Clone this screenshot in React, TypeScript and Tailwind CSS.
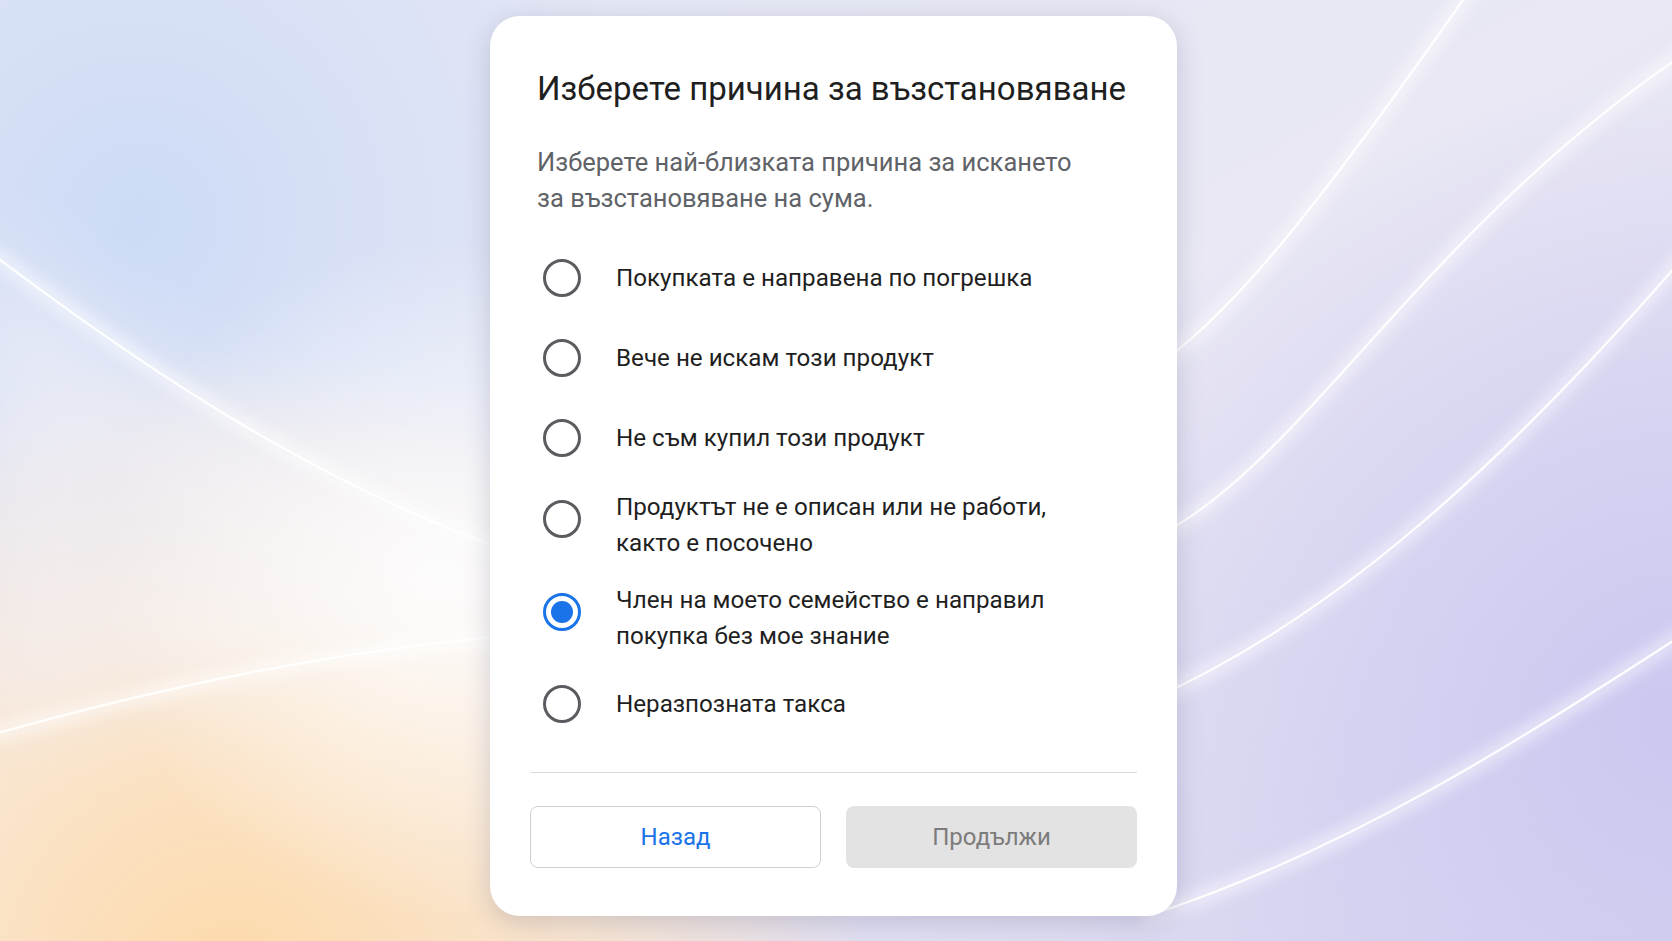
import { useState } from 'react'

type Reason = { id: string; label: string; twoLine?: boolean }

const REASONS: Reason[] = [
  { id: 'mistake', label: 'Покупката е направена по погрешка' },
  { id: 'unwanted', label: 'Вече не искам този продукт' },
  { id: 'notBought', label: 'Не съм купил този продукт' },
  { id: 'broken', label: 'Продуктът не е описан или не работи, както е посочено', twoLine: true },
  { id: 'family', label: 'Член на моето семейство е направил покупка без мое знание', twoLine: true },
  { id: 'unknown', label: 'Неразпозната такса' },
]

// Soft gradient backdrop with glowing light streaks
function Backdrop() {
  const streaks = [
    'M -20 245 C 120 350, 300 480, 520 555',
    'M -20 738 C 150 690, 330 650, 520 635',
    'M 1150 370 C 1230 320, 1330 190, 1470 -10',
    'M 1150 540 C 1300 470, 1420 230, 1690 50',
    'M 1150 700 C 1330 620, 1500 470, 1690 250',
    'M 1150 915 C 1350 850, 1520 740, 1690 630',
  ]
  return (
    <svg className="absolute inset-0 h-full w-full" viewBox="0 0 1672 941" preserveAspectRatio="none">
      <defs>
        <linearGradient id="bgBase" x1="0" y1="0" x2="1" y2="1">
          <stop offset="0" stopColor="#e3e7f6" />
          <stop offset="0.5" stopColor="#e9e8f4" />
          <stop offset="1" stopColor="#d9d6f1" />
        </linearGradient>
        <radialGradient id="bgBlue" cx="140" cy="220" r="520" gradientUnits="userSpaceOnUse">
          <stop offset="0" stopColor="#cddbf6" />
          <stop offset="1" stopColor="#cddbf6" stopOpacity="0" />
        </radialGradient>
        <radialGradient id="bgPeach" cx="230" cy="990" r="640" gradientUnits="userSpaceOnUse">
          <stop offset="0" stopColor="#fdd9a8" />
          <stop offset="0.55" stopColor="#fde5c8" stopOpacity="0.8" />
          <stop offset="1" stopColor="#fde5c8" stopOpacity="0" />
        </radialGradient>
        <radialGradient id="bgLav" cx="1672" cy="720" r="640" gradientUnits="userSpaceOnUse">
          <stop offset="0" stopColor="#cbc8f0" />
          <stop offset="1" stopColor="#cbc8f0" stopOpacity="0" />
        </radialGradient>
        <radialGradient id="bgGlow" cx="440" cy="580" r="340" gradientUnits="userSpaceOnUse">
          <stop offset="0" stopColor="#ffffff" stopOpacity="0.85" />
          <stop offset="1" stopColor="#ffffff" stopOpacity="0" />
        </radialGradient>
        <filter id="soft" x="-20%" y="-20%" width="140%" height="140%">
          <feGaussianBlur stdDeviation="7" />
        </filter>
        <filter id="wide" x="-50%" y="-50%" width="200%" height="200%">
          <feGaussianBlur stdDeviation="40" />
        </filter>
      </defs>
      <rect width="1672" height="941" fill="url(#bgBase)" />
      <rect width="1672" height="941" fill="url(#bgBlue)" />
      <rect width="1672" height="941" fill="url(#bgPeach)" />
      <rect width="1672" height="941" fill="url(#bgLav)" />
      <path
        d="M -20 245 C 120 350, 300 480, 520 555 L 520 635 C 330 650, 150 690, -20 738 Z"
        fill="#f4f2f7"
        opacity="0.55"
        filter="url(#wide)"
      />
      <rect width="1672" height="941" fill="url(#bgGlow)" />
      {streaks.map((d, i) => (
        <g key={i} fill="none" stroke="#ffffff" strokeLinecap="round">
          <path d={d} strokeWidth={16} opacity={0.5} filter="url(#soft)" />
          <path d={d} strokeWidth={2.2} opacity={0.95} />
        </g>
      ))}
    </svg>
  )
}

function RadioDot({ checked }: { checked: boolean }) {
  return checked ? (
    <div className="flex h-[38px] w-[38px] shrink-0 items-center justify-center rounded-full border-[3px] border-[#1a73e8]">
      <div className="h-[22px] w-[22px] rounded-full bg-[#1a73e8]" />
    </div>
  ) : (
    <div className="h-[38px] w-[38px] shrink-0 rounded-full border-[3px] border-[#5a5c60]" />
  )
}

export default function App() {
  const [selected, setSelected] = useState('family')

  return (
    <div
      className="relative flex h-[941px] w-full justify-center overflow-hidden pt-[16px]"
      style={{ fontFamily: 'Roboto, "Noto Sans", sans-serif' }}
    >
      <Backdrop />

      <div className="relative mr-[5px] flex w-[687px] flex-col self-start rounded-[30px] bg-white px-10 pt-[53px] pb-[48px] shadow-[0_6px_26px_rgba(70,72,110,0.22)]">
        {/* Heading */}
        <div className="px-[7px]">
          <h1 className="text-[33px] leading-[40px] text-[#1f1f1f]">
            Изберете причина за възстановяване
          </h1>
          <p className="mt-[35px] max-w-[560px] text-[25.5px] leading-[36px] text-[#5f6368]">
            Изберете най-близката причина за искането
            <br />
            за възстановяване на сума.
          </p>
        </div>

        {/* Reason list */}
        <ul className="mt-[22px] flex flex-col pl-[13px]">
          {REASONS.map(r => (
            <li
              key={r.id}
              onClick={() => setSelected(r.id)}
              className={`flex cursor-pointer items-center gap-[35px] ${r.twoLine ? 'h-[93px]' : 'h-[80px]'}`}
            >
              <div className={r.twoLine ? '-translate-y-[6px]' : ''}>
                <RadioDot checked={selected === r.id} />
              </div>
              <span className="max-w-[470px] text-[24.2px] leading-[36px] text-[#1f1f1f]">{r.label}</span>
            </li>
          ))}
        </ul>

        <div className="mt-[28px] h-px shrink-0 bg-[#d9d9dc]" />

        {/* Actions */}
        <div className="mt-[33px] grid grid-cols-2 gap-[25px]">
          <button className="h-[62px] rounded-[8px] border border-[#cfd0d3] bg-white text-[24px] text-[#1a73e8]">
            Назад
          </button>
          <button disabled className="h-[62px] rounded-[8px] bg-[#e3e3e3] text-[24px] text-[#7c7c7c]">
            Продължи
          </button>
        </div>
      </div>
    </div>
  )
}
